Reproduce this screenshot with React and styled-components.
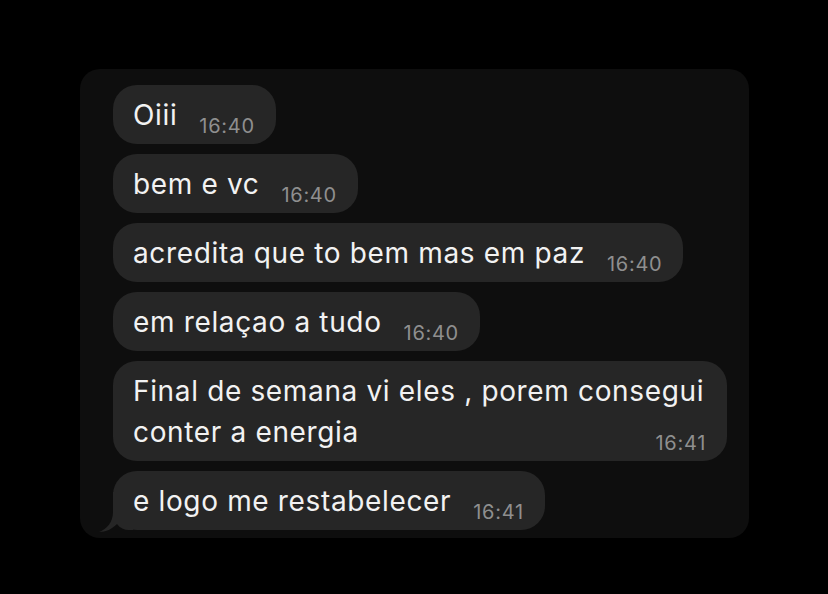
import styled, { createGlobalStyle } from "styled-components";

const GlobalStyle = createGlobalStyle`
  html, body {
    margin: 0;
    padding: 0;
    background: #000;
  }
  body {
    font-family: Inter, "Noto Sans", sans-serif;
    -webkit-font-smoothing: antialiased;
  }
`;

const Page = styled.div`
  width: 828px;
  height: 594px;
  box-sizing: border-box;
  padding: 69px 0 0 80px;
  background: #000;
`;

const Panel = styled.div`
  width: 669px;
  height: 469px;
  box-sizing: border-box;
  padding: 16px 22px 8px 33px;
  background: #0e0e0e;
  border-radius: 20px;
  display: flex;
  flex-direction: column;
  align-items: flex-start;
  gap: 10px;
`;

const Bubble = styled.div`
  position: relative;
  display: flow-root;
  max-width: 576px;
  padding: 10px 21px 8px 20px;
  background: #262626;
  border-radius: 24px;
  color: #f2f2f2;
  font-size: 28px;
  line-height: 41px;
  letter-spacing: 0.65px;
`;

const Time = styled.span`
  float: right;
  margin: 22px 0 0 22px;
  font-size: 20px;
  line-height: 18px;
  color: #8f8f8f;
  letter-spacing: 0.7px;
`;

const Tail = styled.svg`
  position: absolute;
  left: -14px;
  bottom: -2px;
  width: 34px;
  height: 40px;
`;

const messages = [
  { text: "Oiii", time: "16:40" },
  { text: "bem e vc", time: "16:40" },
  { text: "acredita que to bem mas em paz", time: "16:40" },
  { text: "em relaçao a tudo", time: "16:40" },
  { text: "Final de semana vi eles , porem consegui conter a energia", time: "16:41" },
  { text: "e logo me restabelecer", time: "16:41", tail: true },
];

export default function App() {
  return (
    <Page>
      <GlobalStyle />
      <Panel>
        {messages.map((m, i) => (
          <Bubble key={i}>
            {m.tail && (
              <Tail viewBox="0 0 34 40">
                <path
                  d="M14 0 L14 20 C14 30 8 37 0 40 C7 40 13 37 18 32 C21 36 25 38 30 38 L34 38 L34 0 Z"
                  fill="#262626"
                />
              </Tail>
            )}
            {m.text}
            <Time>{m.time}</Time>
          </Bubble>
        ))}
      </Panel>
    </Page>
  );
}
